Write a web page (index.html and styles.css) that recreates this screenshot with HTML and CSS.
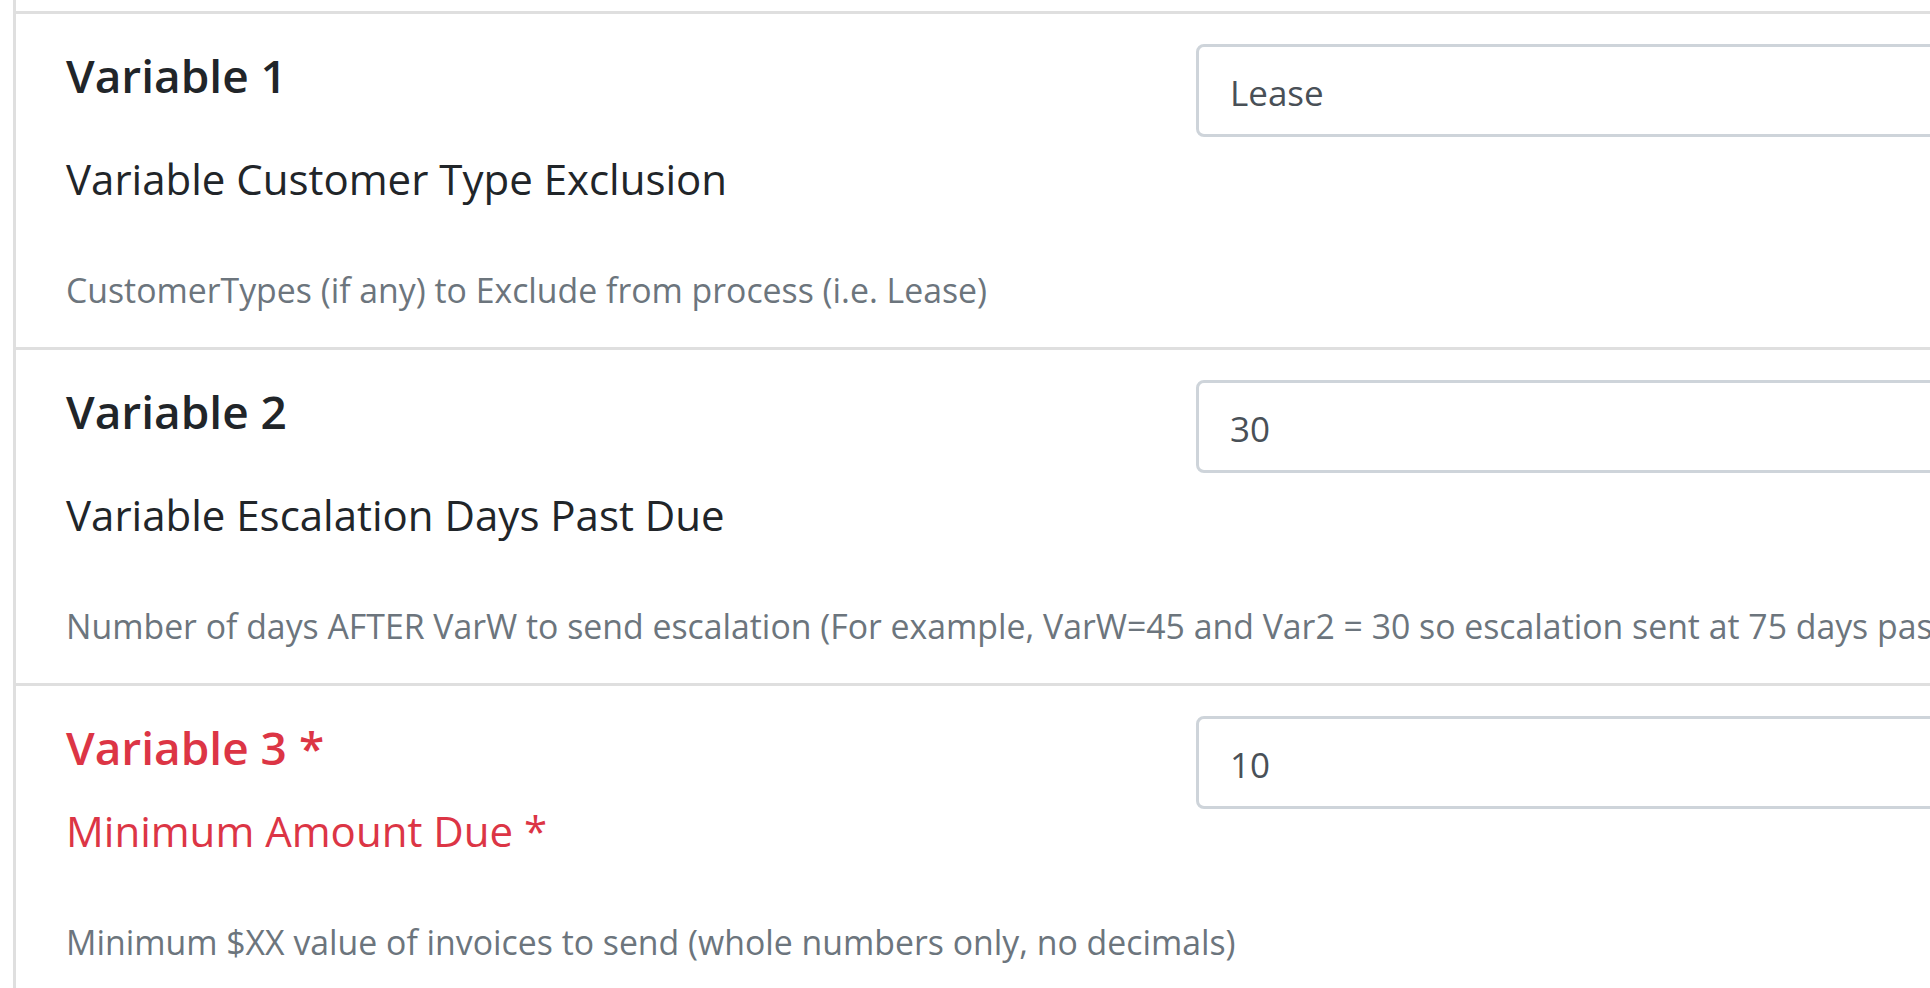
FILE: index.html
```html
<!DOCTYPE html>
<html lang="en">
<head>
<meta charset="utf-8">
<title>Variables</title>
<link rel="stylesheet" href="styles.css">
</head>
<body>
<div class="panel">
  <section class="var-row">
    <div class="var-main">
      <div class="var-labels">
        <h5 class="var-title">Variable 1</h5>
        <div class="var-name">Variable Customer Type Exclusion</div>
      </div>
      <div class="var-field"><input class="form-control" type="text" value="Lease"></div>
    </div>
    <div class="var-desc">CustomerTypes (if any) to Exclude from process (i.e. Lease)</div>
  </section>
  <section class="var-row">
    <div class="var-main">
      <div class="var-labels">
        <h5 class="var-title">Variable 2</h5>
        <div class="var-name">Variable Escalation Days Past Due</div>
      </div>
      <div class="var-field"><input class="form-control" type="text" value="30"></div>
    </div>
    <div class="var-desc">Number of days AFTER VarW to send escalation (For example, VarW=45 and Var2 = 30 so escalation sent at 75 days past due)</div>
  </section>
  <section class="var-row is-required">
    <div class="var-main">
      <div class="var-labels">
        <h5 class="var-title">Variable 3 *</h5>
        <div class="var-name">Minimum Amount Due *</div>
      </div>
      <div class="var-field"><input class="form-control" type="text" value="10"></div>
    </div>
    <div class="var-desc">Minimum $XX value of invoices to send (whole numbers only, no decimals)</div>
  </section>
</div>
</body>
</html>
```

FILE: styles.css
```css
html, body {
  margin: 0;
  padding: 0;
  background: #ffffff;
  overflow: hidden;
}

body {
  font-family: "Open Sans", "Noto Sans", "Liberation Sans", sans-serif;
  color: #212529;
}

.panel {
  margin-left: 13px;
  border-left: 3px solid #dfdfdf;
  padding-top: 11px;
  min-height: 977px;
}

.var-row {
  border-top: 3px solid #dfdfdf;
  padding: 30px 0 34px 50px;
}

.var-main {
  display: flex;
  align-items: flex-start;
}

.var-labels {
  flex: 0 0 1130px;
}

.var-title {
  margin: 0;
  font-size: 46px;
  line-height: 63px;
  font-weight: 600;
  color: #212529;
}

.var-name {
  margin-top: 43px;
  font-size: 42px;
  line-height: 57px;
  color: #212529;
}

.var-field {
  flex: 0 0 1100px;
}

.form-control {
  display: block;
  box-sizing: border-box;
  width: 100%;
  height: 93px;
  margin: 0;
  padding: 4px 31px 0;
  border: 3px solid #ced4da;
  border-radius: 8px;
  background: #ffffff;
  font-family: inherit;
  font-size: 35px;
  color: #495057;
  outline: none;
}

.var-desc {
  margin-top: 60px;
  font-size: 33.8px;
  line-height: 46px;
  color: #6c757d;
  white-space: nowrap;
}

.is-required .var-title,
.is-required .var-name {
  color: #dc3545;
}

.is-required .var-name {
  margin-top: 23px;
}
```
